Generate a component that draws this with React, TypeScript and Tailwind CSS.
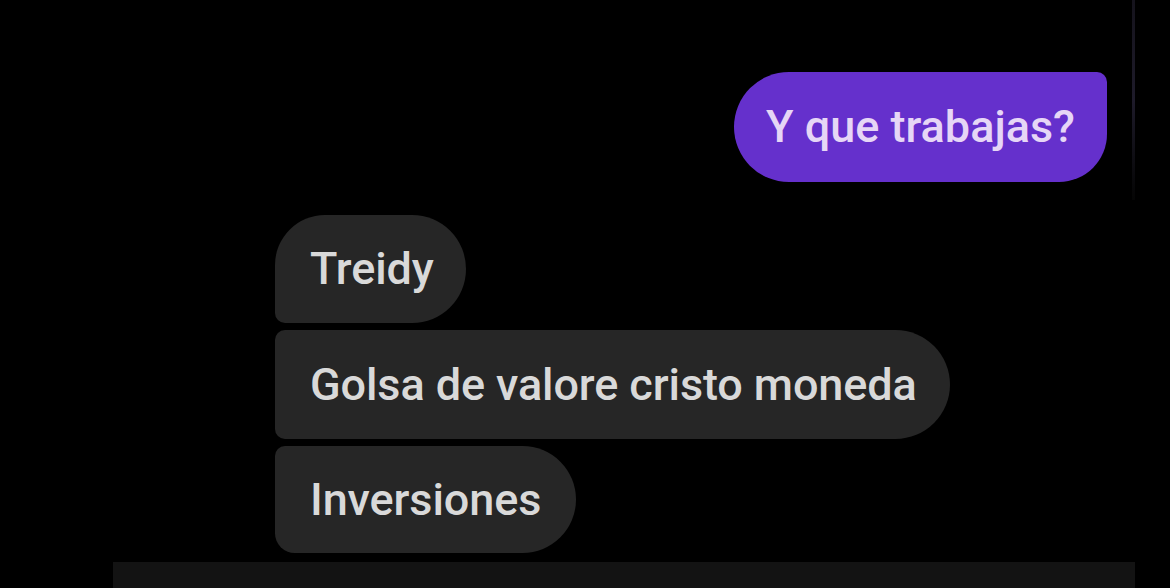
export default function App() {
  const font = { fontFamily: 'Roboto, "Noto Sans", sans-serif' };
  return (
    <div className="relative h-[588px] w-[1170px] overflow-hidden bg-black" style={font}>
      <div className="absolute left-[1132px] top-0 h-[200px] w-[3px] bg-gradient-to-b from-[#15131c] via-[#1e1b2a] to-[#050505]" />
      <div className="flex flex-col pt-[72px]">
        <div className="mr-[63px] flex h-[110px] items-center self-end rounded-l-[55px] rounded-tr-[10px] rounded-br-[48px] bg-[#6530cc] px-[32px] text-[45px] font-medium tracking-[0px] text-[#e6d6f6]">
          Y que trabajas?
        </div>
        <div className="ml-[275px] mt-[33px] flex flex-col items-start gap-[7px] text-[45px] font-medium tracking-[-0.1px] text-[#d9d9d9]">
          <div className="flex h-[108px] items-center rounded-tl-[50px] rounded-tr-[54px] rounded-br-[54px] rounded-bl-[10px] bg-[#262626] pl-[35px] pr-[32px]">
            Treidy
          </div>
          <div className="flex h-[109px] items-center rounded-l-[10px] rounded-r-[55px] bg-[#262626] pl-[35px] pr-[33px]">
            Golsa de valore cristo moneda
          </div>
          <div className="flex h-[107px] items-center rounded-tl-[10px] rounded-bl-[20px] rounded-r-[54px] bg-[#262626] pl-[35px] pr-[35px]">
            Inversiones
          </div>
        </div>
        <div className="ml-[113px] mt-[9px] h-[40px] w-[1022px] bg-[#131313]" />
      </div>
    </div>
  );
}
